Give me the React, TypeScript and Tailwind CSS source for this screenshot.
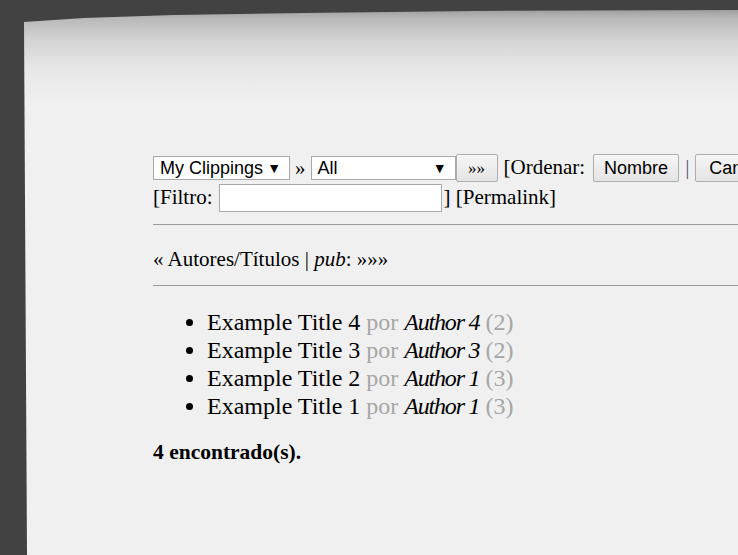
import React from "react";

const items = [
  { t: "Example Title 4", a: "Author 4", n: 2 },
  { t: "Example Title 3", a: "Author 3", n: 2 },
  { t: "Example Title 2", a: "Author 1", n: 3 },
  { t: "Example Title 1", a: "Author 1", n: 3 },
];

function Select({ label, w }: { label: string; w: string }) {
  return (
    <div
      className={`${w} h-[24px] shrink-0 border border-[#a9a9a9] bg-white pl-[6px] pr-[8px] flex items-center justify-between font-['Liberation_Sans',sans-serif] text-[18px] leading-none text-black`}
    >
      <span>{label}</span>
      <span className="text-[14px]">▼</span>
    </div>
  );
}

function Btn({ children, w }: { children: React.ReactNode; w?: string }) {
  return (
    <div
      className={`${w ?? ""} h-[28px] shrink-0 px-[10px] rounded-[2px] border border-[#adadad] bg-[linear-gradient(to_bottom,#f6f6f6,#e4e4e4)] flex items-center justify-center font-['Liberation_Sans',sans-serif] text-[18px] leading-none text-black`}
    >
      {children}
    </div>
  );
}

export default function App() {
  return (
    <div className="h-[555px] w-[738px] overflow-hidden bg-[#424242] pl-[24px] pt-[10px]">
      <div className="h-[545px] overflow-hidden bg-[linear-gradient(to_bottom,#9e9e9e_0px,#b8b8b8_8px,#d3d3d3_30px,#e8e8e8_60px,#f0f0f0_95px)] [clip-path:polygon(0_12px,60px_8px,150px_5px,280px_3px,450px_1px,100%_0,100%_100%,3px_100%)] pl-[129px] pt-[144px] font-['Liberation_Serif',serif] text-[21px] text-black">
        {/* Row 1 */}
        <div className="flex items-center h-[28px] whitespace-nowrap">
          <Select label="My Clippings" w="w-[137px]" />
          <span className="mx-[5px] leading-none">»</span>
          <Select label="All" w="w-[145px]" />
          <Btn w="w-[42px]">
            <span className="font-['Liberation_Serif',serif] text-[17px]">»»</span>
          </Btn>
          <span className="ml-[6px] mr-[8px]">[Ordenar:</span>
          <Btn w="w-[86px]">Nombre</Btn>
          <span className="mx-[6px] text-[#5e5182]">|</span>
          <Btn w="w-[100px]">Cantidad</Btn>
        </div>
        {/* Row 2 */}
        <div className="flex items-center h-[29px] mt-[1px] whitespace-nowrap">
          <span>[Filtro:</span>
          <div className="ml-[6px] w-[223px] h-[28px] border border-[#a9a9a9] bg-white shrink-0" />
          <span className="ml-[2px]">] [Permalink]</span>
        </div>
        <div className="mt-[12px] border-t border-[#9a9a9a] h-0" />
        <div className="mt-[23px] leading-[23px]">
          « Autores/Títulos | <i>pub</i>: »»»
        </div>
        <div className="mt-[14px] border-t border-[#9a9a9a] h-0" />
        <ul className="list-disc pl-[54px] mt-[22px] text-[24px] leading-[28px]">
          {items.map((it) => (
            <li key={it.t}>
              {it.t} <span className="text-[#a6a6a6]">por</span>{" "}
              <i className="tracking-[-1.2px]">{it.a}</i>{" "}
              <span className="text-[#a6a6a6]">({it.n})</span>
            </li>
          ))}
        </ul>
        <div className="mt-[20px] font-bold text-[21.5px] leading-[24px]">4 encontrado(s).</div>
      </div>
    </div>
  );
}
